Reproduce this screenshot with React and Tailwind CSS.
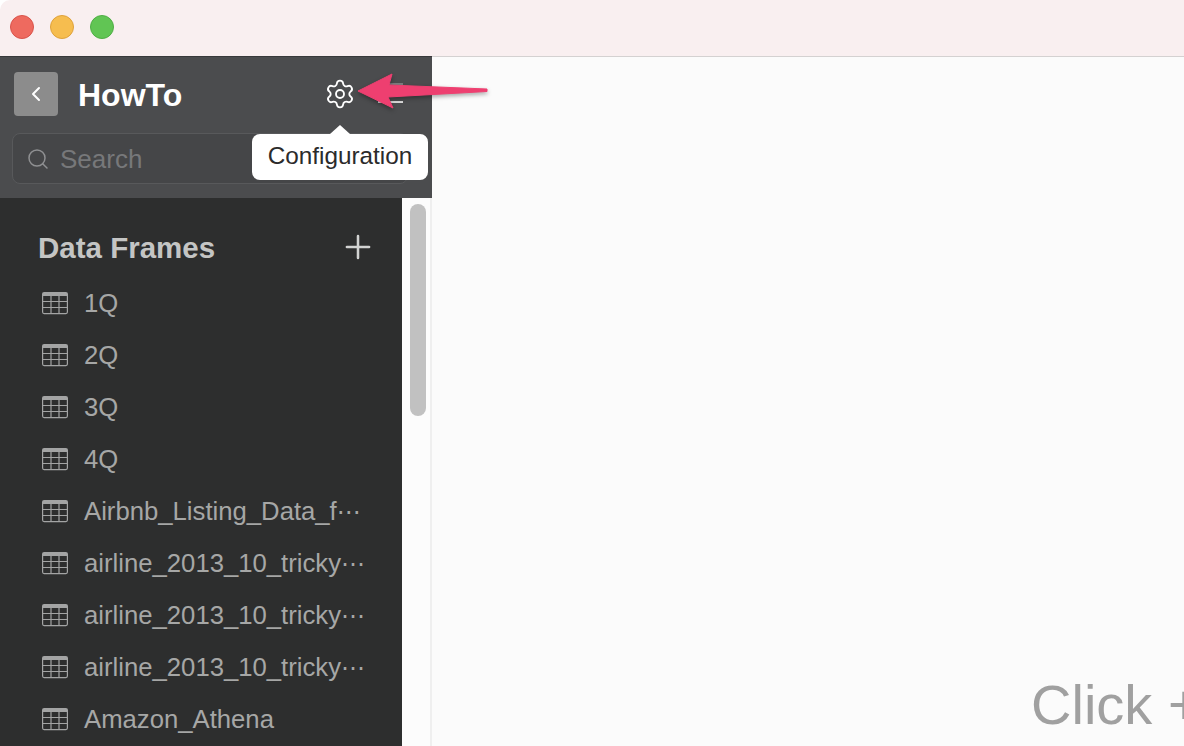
import { ChevronLeft, Search, Settings, Plus } from 'lucide-react';

const frames = [
  '1Q',
  '2Q',
  '3Q',
  '4Q',
  'Airbnb_Listing_Data_f',
  'airline_2013_10_tricky',
  'airline_2013_10_tricky',
  'airline_2013_10_tricky',
  'Amazon_Athena',
];

// the table glyph used by every row of the list
function TableIcon() {
  return (
    <svg width="26" height="24" viewBox="0 1 26 24" fill="none" className="shrink-0 text-[#a3a4a4]">
      <rect x="0.6" y="2.6" width="24.8" height="21" rx="1.5" stroke="currentColor" strokeWidth="1.2" />
      <path d="M1 3h24v3H1z" fill="currentColor" />
      <path d="M1 11.5h24M1 17.5h24M9 5v18M17 5v18" stroke="currentColor" strokeWidth="1.2" />
    </svg>
  );
}

export default function App() {
  return (
    <div className="h-[746px] w-[1184px] overflow-hidden bg-white flex flex-col font-['Liberation_Sans',sans-serif]">
      {/* Title bar */}
      <div className="h-[57px] shrink-0 flex items-center gap-4 pl-[10px] pb-[2px] bg-[#f9eff0] border-b border-[#d4d1d1] rounded-tl-[10px]">
        <span className="w-6 h-6 rounded-full bg-[#ee6a5f] border border-[#d9534a]" />
        <span className="w-6 h-6 rounded-full bg-[#f6bd4f] border border-[#dfa23b]" />
        <span className="w-6 h-6 rounded-full bg-[#61c554] border border-[#4fae45]" />
      </div>

      <div className="flex flex-1 min-h-0">
        {/* Sidebar */}
        <aside className="w-[432px] shrink-0 flex flex-col relative">
          <div className="h-[142px] -mt-px shrink-0 bg-[#4b4c4e] border-t border-[#38393b]">
            <div className="flex items-center pl-[14px] pt-[15px]">
              <button className="w-11 h-11 rounded-[4px] bg-[#8c8c8c] flex items-center justify-center text-white">
                <ChevronLeft size={24} strokeWidth={2} />
              </button>
              <span className="ml-5 mt-[2px] text-[32px] leading-[42px] font-bold text-white">HowTo</span>
              <Settings size={32} strokeWidth={1.4} className="ml-[142px] text-white" />
              <div className="ml-[22px] mb-[2px] flex flex-col gap-[16px]">
                <span className="block w-[25px] h-[2px] bg-[#7d7e80]" />
                <span className="block w-[25px] h-[2px] bg-[#d8d8d8]" />
              </div>
            </div>
            <div className="mt-[17px] ml-[12px] mr-[24px] h-[51px] rounded-[8px] border border-[#58595b] bg-[#454648] flex items-center pl-[13px] gap-[10px]">
              <Search size={24} strokeWidth={1.5} className="text-[#8f9092]" />
              <span className="text-[26px] leading-[30px] text-[#77787a]">Search</span>
            </div>
          </div>

          <div className="flex flex-1 min-h-0">
            <div className="w-[402px] shrink-0 bg-[#2d2e2e]">
              <div className="h-[79px] flex items-center justify-between pl-[38px] pr-[25px] pt-[21px]">
                <span className="text-[29.5px] leading-[34px] font-bold text-[#c4c5c4]">Data Frames</span>
                <Plus size={38} strokeWidth={1.6} className="text-[#d2d3d2] -mt-[2px]" />
              </div>
              <ul>
                {frames.map((name, i) => (
                  <li key={i} className="h-[52px] flex items-center pl-[42px] gap-[16px] text-[25.7px] text-[#a6a7a6] whitespace-nowrap">
                    <TableIcon />
                    <span>
                      {name}
                      {i > 3 && i < 8 ? <span className="text-[24px] font-['DejaVu_Sans',sans-serif]">⋯</span> : null}
                    </span>
                  </li>
                ))}
              </ul>
            </div>
            {/* Scrollbar */}
            <div className="w-[28px] shrink-0 bg-[#fcfcfc] pl-[8px] pt-[6px]">
              <div className="w-4 h-[212px] rounded-full bg-[#c1c1c1]" />
            </div>
            <div className="w-[2px] shrink-0 bg-[#efefef]" />
          </div>

          {/* Tooltip */}
          <div className="absolute left-[252px] top-[77px] h-[46px] w-[176px] pb-[2px] rounded-[8px] bg-white flex items-center justify-center text-[24.3px] text-[#2b2b2b] whitespace-nowrap">
            <span className="absolute left-[78px] -top-[9px] w-0 h-0 border-x-[10px] border-x-transparent border-b-[9px] border-b-white" />
            Configuration
          </div>

          {/* Annotation arrow */}
          <svg width="140" height="64" viewBox="0 0 140 64" className="absolute left-[355px] top-[8px] overflow-visible">
            <path
              d="M3 26 L37 9 L34 20 L132 24 L132 26.5 L33 32 L38 43 Z"
              fill="#ee3f70"
              stroke="#ee3f70"
              strokeWidth="1"
              strokeLinejoin="round"
              className="drop-shadow-[0_2px_2px_rgba(0,0,0,0.35)]"
            />
          </svg>
        </aside>

        {/* Main area */}
        <main className="flex-1 bg-[#fbfbfb] pl-[599px] pt-[616px] overflow-hidden">
          <span className="block text-[56px] leading-[64px] text-[#a0a0a0] whitespace-nowrap">Click +</span>
        </main>
      </div>
    </div>
  );
}
